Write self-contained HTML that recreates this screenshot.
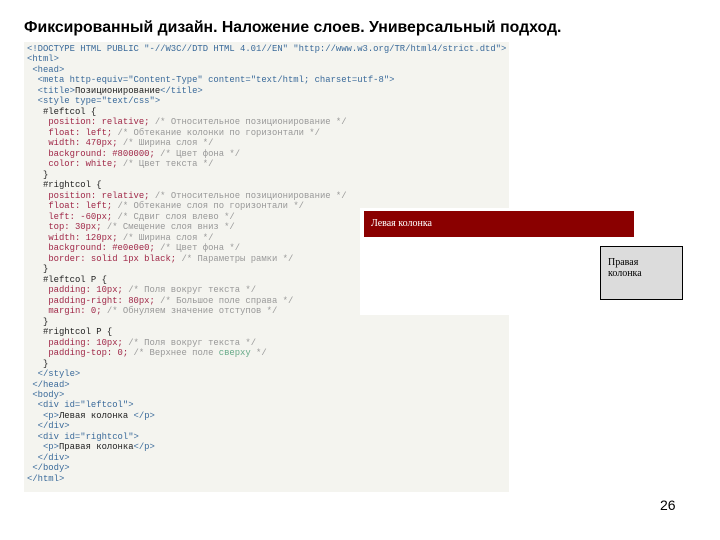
<!DOCTYPE html>
<html><head><meta charset="utf-8"><style>
body{margin:0;width:720px;height:540px;background:#fff;position:relative;overflow:hidden;font-family:"Liberation Sans",sans-serif}
.t{position:absolute;left:24px;top:19px;font-size:15.8px;font-weight:bold;color:#000;white-space:nowrap}
.code{position:absolute;left:24px;top:42px;width:485px;height:450px;background:#f4f4ef}
pre{margin:0;position:absolute;left:3px;top:2px;font-family:"Liberation Mono",monospace;font-size:8.9px;line-height:10.48px;color:#999}
.k{color:#222}.r{color:#a02848}.g{color:#6a8}.b{color:#3a6a9a}.s{color:#222}
.w{position:absolute;left:360px;top:208px;width:150px;height:107px;background:#fff}
.red{position:absolute;left:364px;top:211px;width:270px;height:26px;background:#8a0000;color:#fff;font-family:"Liberation Serif",serif;font-size:10px;line-height:26px;padding-left:7px;box-sizing:border-box}
.gr{position:absolute;left:600px;top:246px;width:83px;height:54px;background:#dcdcdc;border:1px solid #000;box-sizing:border-box;font-family:"Liberation Serif",serif;font-size:10px;line-height:11px;padding:10px 7px;color:#000}
.n{position:absolute;left:660px;top:497px;font-size:14px;color:#000}
</style></head><body>
<div class="t">Фиксированный дизайн. Наложение слоев. Универсальный подход.</div>
<div class="code"><pre><span class="b">&lt;!DOCTYPE HTML PUBLIC "-//W3C//DTD HTML 4.01//EN" "http://www.w3.org/TR/html4/strict.dtd"&gt;</span>
<span class="b">&lt;html&gt;</span>
 <span class="b">&lt;head&gt;</span>
  <span class="b">&lt;meta http-equiv="Content-Type" content="text/html; charset=utf-8"&gt;</span>
  <span class="b">&lt;title&gt;</span><span class="s">Позиционирование</span><span class="b">&lt;/title&gt;</span>
  <span class="b">&lt;style type="text/css"&gt;</span>
   <span class="k">#leftcol {</span>
    <span class="r">position: relative;</span> /* Относительное позиционирование */
    <span class="r">float: left;</span> /* Обтекание колонки по горизонтали */
    <span class="r">width: 470px;</span> /* Ширина слоя */
    <span class="r">background: #800000;</span> /* Цвет фона */
    <span class="r">color: white;</span> /* Цвет текста */
   <span class="k">}</span>
   <span class="k">#rightcol {</span>
    <span class="r">position: relative;</span> /* Относительное позиционирование */
    <span class="r">float: left;</span> /* Обтекание слоя по горизонтали */
    <span class="r">left: -60px;</span> /* Сдвиг слоя влево */
    <span class="r">top: 30px;</span> /* Смещение слоя вниз */
    <span class="r">width: 120px;</span> /* Ширина слоя */
    <span class="r">background: #e0e0e0;</span> /* Цвет фона */
    <span class="r">border: solid 1px black;</span> /* Параметры рамки */
   <span class="k">}</span>
   <span class="k">#leftcol P {</span>
    <span class="r">padding: 10px;</span> /* Поля вокруг текста */
    <span class="r">padding-right: 80px;</span> /* Большое поле справа */
    <span class="r">margin: 0;</span> /* Обнуляем значение отступов */
   <span class="k">}</span>
   <span class="k">#rightcol P {</span>
    <span class="r">padding: 10px;</span> /* Поля вокруг текста */
    <span class="r">padding-top: 0;</span> /* Верхнее поле <span class="g">сверху</span> */
   <span class="k">}</span>
  <span class="b">&lt;/style&gt;</span>
 <span class="b">&lt;/head&gt;</span>
 <span class="b">&lt;body&gt;</span>
  <span class="b">&lt;div id="leftcol"&gt;</span>
   <span class="b">&lt;p&gt;</span><span class="s">Левая колонка</span> <span class="b">&lt;/p&gt;</span>
  <span class="b">&lt;/div&gt;</span>
  <span class="b">&lt;div id="rightcol"&gt;</span>
   <span class="b">&lt;p&gt;</span><span class="s">Правая колонка</span><span class="b">&lt;/p&gt;</span>
  <span class="b">&lt;/div&gt;</span>
 <span class="b">&lt;/body&gt;</span>
<span class="b">&lt;/html&gt;</span></pre></div>
<div class="w"></div>
<div class="red">Левая колонка</div>
<div class="gr">Правая<br>колонка</div>
<div class="n">26</div>
</body></html>
